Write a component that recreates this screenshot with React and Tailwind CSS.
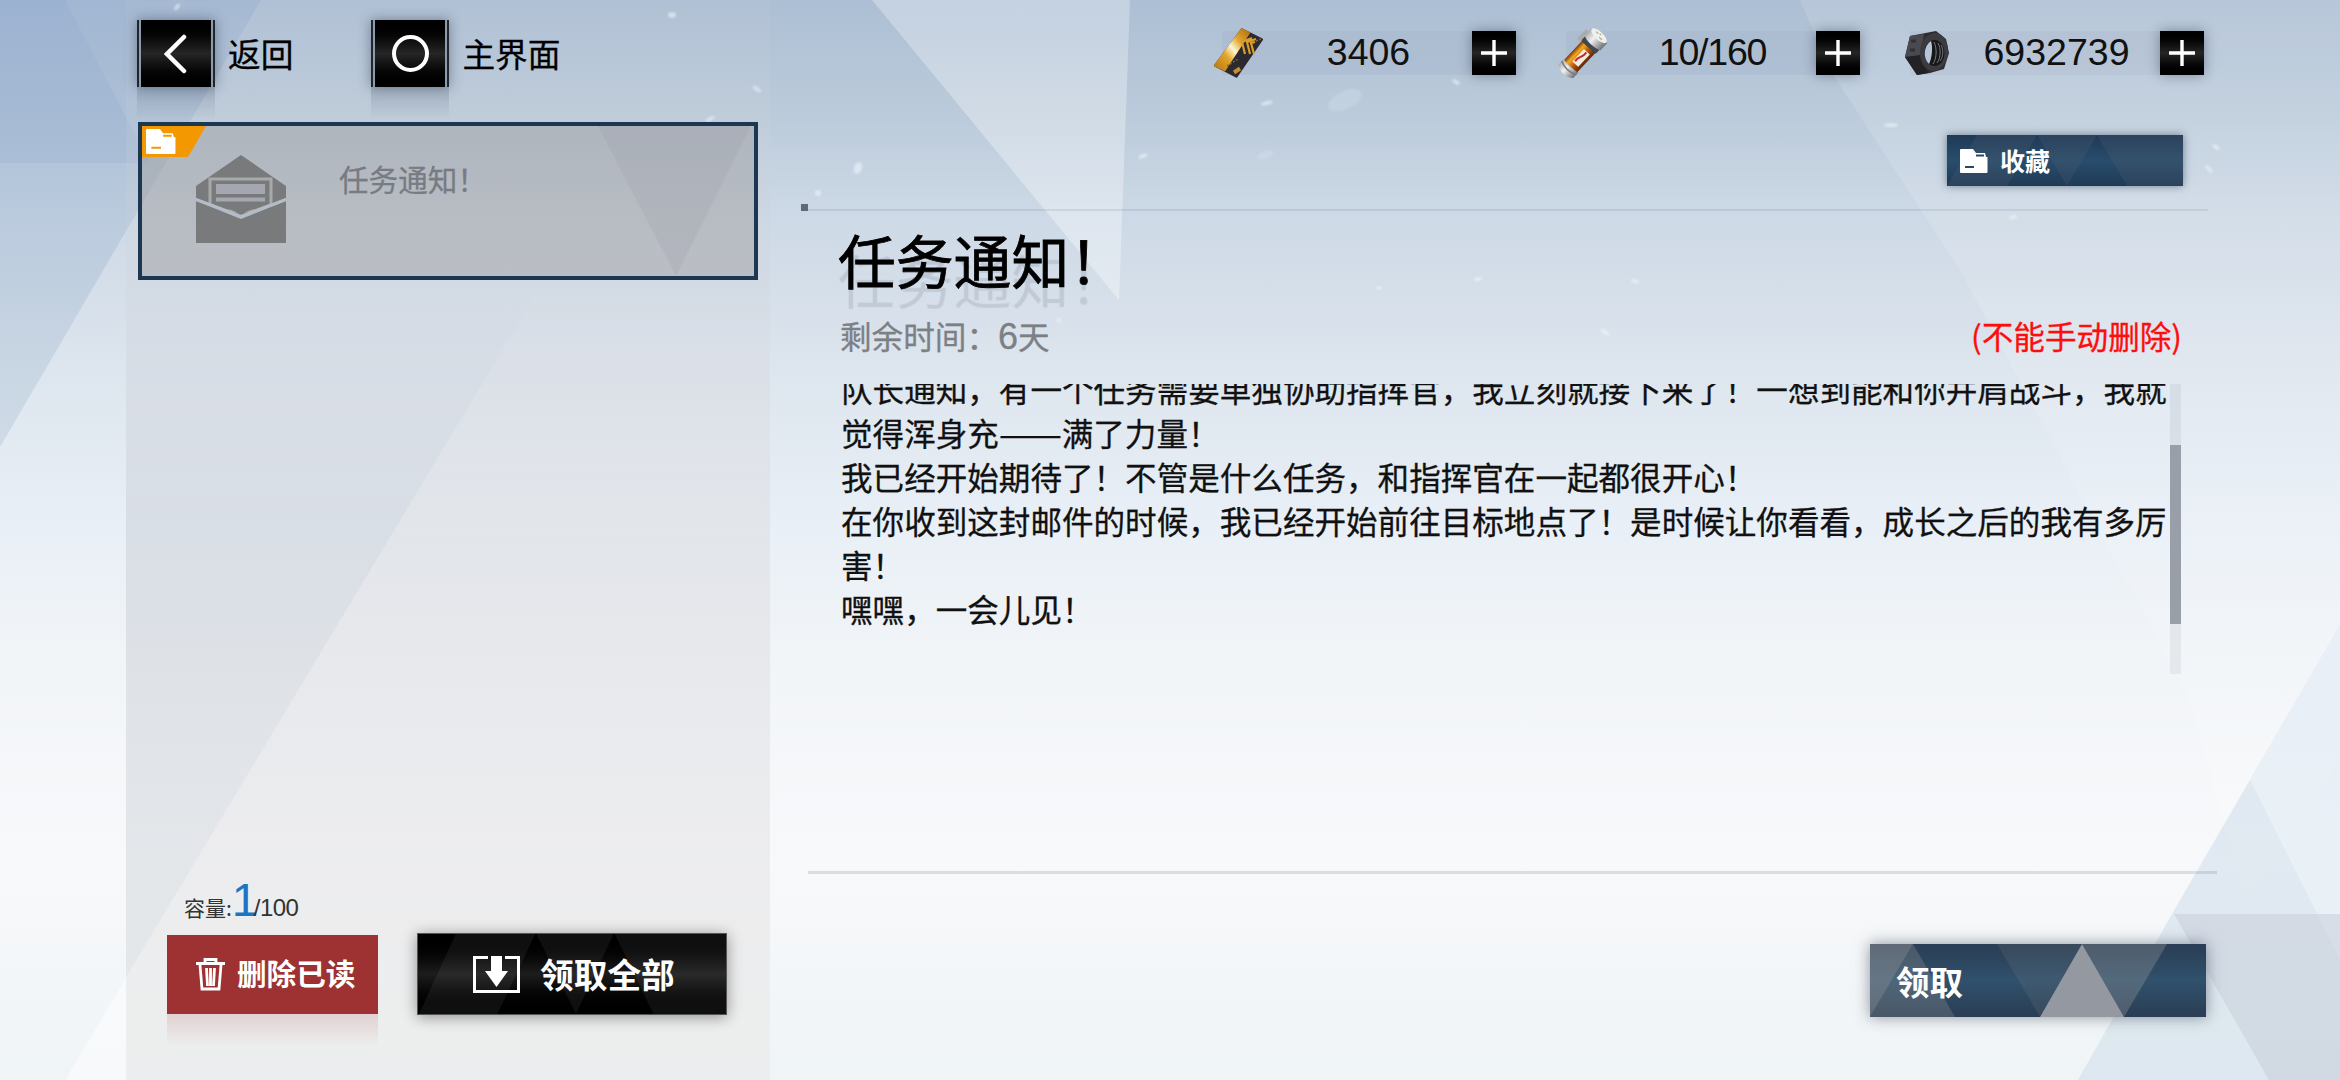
const FONT = "font-['Noto_Sans_CJK_SC',sans-serif]";

const mailLines = [
    '队长通知，有一个任务需要单独协助指挥官，我立刻就接下来了！一想到能和你并肩战斗，我就',
    <>觉得浑身充<span className="mr-[10px] inline-block origin-left scale-x-[1.19]">——</span>满了力量！</>,
    '我已经开始期待了！不管是什么任务，和指挥官在一起都很开心！',
    '在你收到这封邮件的时候，我已经开始前往目标地点了！是时候让你看看，成长之后的我有多厉',
    '害！',
    '嘿嘿，一会儿见！',
];

// small light flecks scattered over the sky: x, y, rx, ry, angle
const flecks = [
    [177, 7, 4, 2, -50], [672, 15, 4, 3, 0], [757, 89, 5, 2, 35], [710, 119, 5, 2, -30],
    [1267, 103, 6, 2, -15], [1265, 155, 9, 4, -20], [1143, 156, 5, 2, -20], [818, 193, 3, 3, 0],
    [858, 168, 4, 6, 20], [1891, 125, 7, 2, 0], [2216, 147, 4, 2, 30], [2209, 169, 5, 2, 50],
    [1478, 279, 4, 2, -10], [1605, 332, 5, 2, 30], [1635, 281, 4, 2, 10], [1379, 288, 3, 1.5, 0],
    [2013, 217, 4, 2, -20], [1456, 82, 4, 2, 30], [1059, 320, 2, 2, 0], [1345, 100, 18, 9, -25],
];

function Backdrop() {
    return (
        <svg className="absolute inset-0 h-full w-full" viewBox="0 0 2340 1080" preserveAspectRatio="none">
            <defs>
                <linearGradient id="sky" x1="0" y1="0" x2="0" y2="1">
                    <stop offset="0" stopColor="#adbfd4" />
                    <stop offset="0.1" stopColor="#bacada" />
                    <stop offset="0.2" stopColor="#cdd9e6" />
                    <stop offset="0.33" stopColor="#dce4ed" />
                    <stop offset="0.48" stopColor="#e8eff6" />
                    <stop offset="0.62" stopColor="#f2f5f8" />
                    <stop offset="0.8" stopColor="#f8f9fb" />
                    <stop offset="1" stopColor="#eff4f6" />
                </linearGradient>
                <linearGradient id="fadeBlue" x1="0" y1="0" x2="0" y2="1">
                    <stop offset="0" stopColor="#8fa9cf" stopOpacity="0.4" />
                    <stop offset="1" stopColor="#a0b8cc" stopOpacity="0.3" />
                </linearGradient>
                <linearGradient id="fadeWhite" x1="0" y1="0" x2="0" y2="1">
                    <stop offset="0" stopColor="#fff" stopOpacity="0.28" />
                    <stop offset="1" stopColor="#fff" stopOpacity="0.35" />
                </linearGradient>
                <linearGradient id="facet" x1="0" y1="0" x2="0" y2="1">
                    <stop offset="0" stopColor="#fff" stopOpacity="0" />
                    <stop offset="0.3" stopColor="#fff" stopOpacity="0.25" />
                    <stop offset="1" stopColor="#fff" stopOpacity="0.5" />
                </linearGradient>
                <linearGradient id="shade" gradientUnits="userSpaceOnUse" x1="0" y1="279" x2="0" y2="1080">
                    <stop offset="0" stopColor="#c3d0e0" stopOpacity="0" />
                    <stop offset="0.3" stopColor="#c9d5e0" stopOpacity="0.3" />
                    <stop offset="1" stopColor="#d5e0ea" stopOpacity="0.45" />
                </linearGradient>
                <filter id="soft"><feGaussianBlur stdDeviation="0.8" /></filter>
            </defs>
            <rect width="2340" height="1080" fill="url(#sky)" />
            <polygon points="0,0 261,0 0,447" fill="url(#fadeBlue)" />
            <polygon points="0,0 65,0 150,163 0,163" fill="#8ba6cd" opacity="0.2" />
            <polygon points="545,279 126,977 126,279" fill="url(#shade)" />
            <polygon points="545,279 65,1080 770,1080 770,279" fill="url(#facet)" />
            <polygon points="872,0 1130,0 1119,300" fill="url(#fadeWhite)" />
            <polygon points="1830,70 1960,270 2190,700 2245,905 2340,760 2340,0 1800,0" fill="#fff" opacity="0.13" />
            <polygon points="2340,625 2172,914 2078,1080 2340,1080" fill="#cddcea" opacity="0.55" />
            <polygon points="2340,625 2250,780 2340,960" fill="#f4f8fd" opacity="0.45" />
            <polygon points="2174,914 2340,914 2340,1080 2269,1080" fill="#c5cbd8" opacity="0.5" />
            {flecks.map(([x, y, rx, ry, a]) => (
                <ellipse key={`${x}-${y}`} cx={x} cy={y} rx={rx} ry={ry} fill="#eef6fb" filter="url(#soft)" opacity={rx > 8 ? 0.18 : 0.6} transform={`rotate(${a} ${x} ${y})`} />
            ))}
        </svg>
    );
}

function NavButton({ label, children }) {
    return (
        <div className="flex items-center">
            <div className="relative flex h-[67px] w-[78px] justify-center border-x-2 border-[#20262c] bg-[#8d9cab] px-[2px] shadow-[0_0_12px_rgba(30,40,60,0.45)]">
                <div className="flex h-full w-full items-center justify-center bg-linear-to-b from-black via-[#262626] to-black">{children}</div>
                <div className="absolute -inset-x-[2px] top-full h-8 bg-linear-to-b from-slate-700/20 to-transparent" />
            </div>
            <span className="ml-[13px] text-[32.700px] leading-none text-black [-webkit-text-stroke:0.3px_black]">{label}</span>
        </div>
    );
}

function Currency({ value, icon, tracking = '' }) {
    return (
        <div className="flex h-[50px] w-[304px] items-center">
            <div className="z-10 flex w-[54px] justify-center">{icon}</div>
            <div className="-ml-[44px] flex h-[44px] w-[250px] items-center bg-slate-600/5">
                <span className={`ml-[43px] w-[208px] text-center font-['Liberation_Sans',Arial,sans-serif] text-[37.5px] leading-none text-[#111] ${tracking}`}>{value}</span>
            </div>
            <div className="flex h-[44px] w-[44px] shrink-0 items-center justify-center bg-linear-to-b from-black via-[#262626] to-black shadow-[0_0_12px_rgba(20,30,50,0.4)]">
                <svg className="h-7 w-7" viewBox="0 0 28 28">
                    <path d="M14 1v26M1 14h26" stroke="#fff" strokeWidth="3.4" />
                </svg>
            </div>
        </div>
    );
}

function CardIcon() {
    return (
        <svg className="h-[52px] w-[54px]" viewBox="0 0 54 52">
            <defs>
                <linearGradient id="gold" x1="1" y1="0" x2="0" y2="1">
                    <stop offset="0" stopColor="#a8690f" />
                    <stop offset="0.3" stopColor="#e0a52c" />
                    <stop offset="0.48" stopColor="#fff6d2" />
                    <stop offset="0.65" stopColor="#e3a62a" />
                    <stop offset="1" stopColor="#b5720f" />
                </linearGradient>
            </defs>
            <path d="M29.500 1l21 10.500q1 .6.4 1.600L25.500 50q-.6 1-1.600.4L2.500 39.500q-1-.6-.4-1.600z" fill="#2a2a2f" />
            <path d="M29.500 1l9 4.500L13 44.500l-10.500-5q-1-.6-.4-1.600z" fill="url(#gold)" />
            <path d="M40 11l-10 4 3 12M44 12l-9 3 3 12M43 15l-4 1 3 11" stroke="#dc9c2a" strokeWidth="2.200" fill="none" />
            <path d="M15 39l11-7M44 14l5-2" stroke="#80653a" strokeWidth="1.500" strokeDasharray="2 1.500" />
            <path d="M22 45.500l6-4" stroke="#c48f2f" strokeWidth="4" />
        </svg>
    );
}

function BottleIcon() {
    return (
        <svg className="h-[50px] w-[54px] overflow-visible" viewBox="0 0 54 50">
            <defs>
                <linearGradient id="amber">
                    <stop offset="0" stopColor="#7c3606" />
                    <stop offset="0.25" stopColor="#f0a822" />
                    <stop offset="0.6" stopColor="#b85a0c" />
                    <stop offset="1" stopColor="#5e2606" />
                </linearGradient>
                <linearGradient id="steel">
                    <stop offset="0" stopColor="#a9abad" />
                    <stop offset="0.4" stopColor="#f1f1f1" />
                    <stop offset="1" stopColor="#707276" />
                </linearGradient>
            </defs>
            <g transform="translate(-1 1) rotate(43 27 25)">
                <rect x="18" y="10" width="18" height="32" fill="url(#amber)" />
                <rect x="25" y="20" width="8" height="17" fill="#f4ece4" />
                <path d="M27 35c-2-6 4-8 2-14" stroke="#c02a2a" strokeWidth="2" fill="none" />
                <rect x="17" y="9" width="20" height="7" rx="2" fill="#43474d" />
                <path d="M16 0q11-6 22 0v10q-11 4-22 0z" fill="url(#steel)" />
                <rect x="13" y="4" width="4" height="13" fill="#a9acaf" />
                <ellipse cx="27" cy="0" rx="10" ry="4" fill="#efefec" />
                <path d="M22-1h3M28 1h4M26-2h2" stroke="#aaa58a" />
                <path d="M17 41q10 4 20 0v8q-10 7-20 0z" fill="url(#steel)" />
                <path d="M17 44q10 5 20 0" stroke="#77797c" strokeWidth="1.500" fill="none" />
            </g>
        </svg>
    );
}

function NutIcon() {
    return (
        <svg className="h-[46px] w-[46px]" viewBox="0 0 46 46">
            <path d="M6 6L32 1l10 8 3 14-5 16-14 4-13 2L1 27z" fill="#2d2d30" />
            <path d="M6 6l14-2-4 22-15 1z" fill="#4a494f" />
            <path d="M1 27l15-2 8 18-11 2z" fill="#222225" />
            <path d="M7 11h5M6 20h5" stroke="#303035" strokeWidth="3" />
            <ellipse cx="30" cy="22" rx="14" ry="19" fill="#3c3c40" transform="rotate(6 30 22)" />
            <ellipse cx="30.500" cy="23" rx="10" ry="13" fill="#17171a" />
            <path d="M27 11c-8 5-8 18-2 23 3-6 4-17 2-23z" fill="#b6c6d6" />
            <path d="M30 12c3 6 3 16-1 22M34 13c3 5 3 15-1 20M37 15c3 5 2 12-1 16" stroke="#77777b" fill="none" />
        </svg>
    );
}

function FolderIcon({ className, accent }) {
    return (
        <svg className={className} viewBox="0 0 28 24" preserveAspectRatio="none">
            <path d="M1 0h12l3 4h9l1 4h1.500v15a1 1 0 0 1-1 1H1a1 1 0 0 1-1-1V1a1 1 0 0 1 1-1z" fill="#fff" />
            <path d="M16 6.500h8M5 18h9" stroke={accent} strokeWidth="2" />
        </svg>
    );
}

function EnvelopeIcon() {
    return (
        <svg className="h-[88px] w-[90px]" viewBox="0 0 90 88">
            <path d="M45 0l45 31v12L45 62 0 43V31z" fill="#797a7b" />
            <path d="M14 24h61v26L58 56H31l-17-6z" fill="#797a7b" stroke="#a7a9ab" strokeWidth="3" />
            <path d="M20 29h49v10H20zM20 42.500h49v4H20z" fill="#a5a7b0" />
            <path d="M31 53h28l-14 6z" fill="#797a7b" />
            <path d="M0 46l45 18 45-18v42H0z" fill="#797a7b" />
            <path d="M0 44.500l45 17 45-17" stroke="#b3bdc7" strokeWidth="3" fill="none" />
        </svg>
    );
}

function MailCard() {
    return (
        <div className="relative flex h-[158px] w-[620px] border-4 border-[#1b3752] bg-[#969393]/40">
            <svg className="absolute inset-0 h-full w-full" viewBox="0 0 612 150" preserveAspectRatio="none">
                <path d="M456 0h153L534 150z" fill="#8c8f9b" opacity="0.16" />
                <path d="M0 0h64L46 31H0z" fill="#f39800" />
            </svg>
            <FolderIcon className="absolute left-[4px] top-[3px] h-[25px] w-[30px]" accent="#f39800" />
            <div className="ml-[54px] mt-[29px]"><EnvelopeIcon /></div>
            <span className="ml-[53px] mt-[35px] text-[29.6px] leading-[36px] text-[#787b82] [-webkit-text-stroke:0.3px_#787b82]">任务通知！</span>
        </div>
    );
}

export default function App() {
    return (
        <div className={`relative h-[1080px] w-[2340px] overflow-hidden ${FONT}`}>
            <Backdrop />
            <div className="relative flex h-full">
                <aside className="ml-[126px] flex h-full w-[644px] flex-col bg-linear-to-b from-[#d0d0d8]/10 via-[#cfd0d6]/40 to-[#e6e6e6]/60">
                    <div className="ml-[11px] mt-[20px] flex gap-[78px]">
                        <NavButton label="返回">
                            <svg className="h-[40px] w-[24px]" viewBox="0 0 24 40">
                                <path d="M20 3L3 20l17 17" stroke="#fff" strokeWidth="4.500" fill="none" strokeLinecap="round" />
                            </svg>
                        </NavButton>
                        <NavButton label="主界面">
                            <div className="h-[37px] w-[37px] rounded-full border-4 border-white" />
                        </NavButton>
                    </div>
                    <div className="ml-[12px] mt-[35px]"><MailCard /></div>
                    <div className="mt-auto ml-[58px] flex items-baseline text-[21px] leading-[50px] text-[#333]">
                        <span>容量:</span>
                        <span className="w-[22px] font-['Liberation_Sans',Arial,sans-serif] text-[47px] text-[#1b75c4]">1</span>
                        <span className="font-['Liberation_Sans',Arial,sans-serif] text-[24px] tracking-[-0.6px]">/100</span>
                    </div>
                    <div className="mb-[65px] ml-[41px] flex items-center gap-[39px]">
                        <div className="relative flex h-[79px] w-[211px] items-center bg-[#9e3131]">
                            <svg className="ml-[29px] h-[33px] w-[29px]" viewBox="0 0 29 33">
                                <path d="M0 5.500h29M9 4V1.500h11V4M4 7l2 24h17l2-24M10.500 10l1 18M14.500 10v18M18.500 10l-1 18" stroke="#fff" strokeWidth="2.800" fill="none" />
                            </svg>
                            <span className="ml-[12px] -mt-[3px] text-[29.6px] font-bold leading-none text-white">删除已读</span>
                            <div className="absolute inset-x-0 top-full h-8 bg-linear-to-b from-[#9e3131]/15 to-transparent" />
                        </div>
                        <div className="relative flex h-[82px] w-[310px] items-center border border-[#555] bg-linear-to-b from-black via-[#1d1d1d] to-black shadow-[0_2px_14px_rgba(0,0,0,0.4)]">
                            <svg className="absolute inset-0 h-full w-full" viewBox="0 0 310 82" preserveAspectRatio="none">
                                <path d="M38 0h80L80 82H1zM119 0h78l-38 82zM198 0h112v82h-73z" fill="#fff" opacity="0.06" />
                            </svg>
                            <svg className="relative ml-[55px] h-[37px] w-[47px]" viewBox="0 0 47 37">
                                <path d="M15 1.500H1.500v34h44v-34H32" stroke="#fff" strokeWidth="3" fill="none" />
                                <path d="M18 0h11v15h6L23.500 31 12 15h6z" fill="#fff" />
                            </svg>
                            <span className="relative ml-[20px] text-[33.7px] font-bold leading-none text-white">领取全部</span>
                        </div>
                    </div>
                </aside>

                <main className="flex h-full flex-1 flex-col">
                    <div className="ml-[442px] mt-[28px] flex gap-[40px]">
                        <Currency value="3406" icon={<CardIcon />} />
                        <Currency value="10/160" icon={<BottleIcon />} tracking="tracking-[-1.2px]" />
                        <Currency value="6932739" icon={<NutIcon />} />
                    </div>
                    <div className="relative ml-[1177px] mt-[57px] flex h-[51px] w-[236px] items-center bg-linear-to-b from-[#1f3a56] via-[#284d6c] to-[#1f3a56] shadow-[0_0_8px_rgba(20,40,60,0.5)]">
                        <svg className="absolute inset-0 h-full w-full" viewBox="0 0 236 51" preserveAspectRatio="none">
                            <path d="M30 0h60L60 51H0zM90 0h60l-30 51zM150 0h86v51h-56z" fill="#6a6a7a" opacity="0.18" />
                        </svg>
                        <FolderIcon className="relative ml-[13px] h-[24px] w-[28px]" accent="#284866" />
                        <span className="relative ml-[12px] text-[25px] font-bold leading-none text-white">收藏</span>
                    </div>
                    <div className="ml-[31px] mt-[18px] flex h-[7px] w-[1407px] items-end">
                        <div className="h-[7px] w-[7px] bg-[#5f6a76]" />
                        <div className="h-[2px] flex-1 bg-slate-500/15" />
                    </div>
                    <div className="ml-[68px] mt-[19px] h-[79px] overflow-hidden">
                        <h1 className="text-[57.8px] leading-[58px] text-black [-webkit-text-stroke:0.8px_black] [text-shadow:0_20px_1px_rgba(90,95,115,0.17)]">任务通知！</h1>
                    </div>
                    <div className="ml-[70px] mt-[4px] flex w-[1342px] justify-between text-[31.6px] leading-[44px]">
                        <span className="text-[#7c8085] [-webkit-text-stroke:0.3px_#7c8085]">
                            剩余时间：<span className="font-['Liberation_Sans',Arial,sans-serif] text-[36px] leading-none">6</span>天
                        </span>
                        <span className="text-[#ff0d0d] [-webkit-text-stroke:0.3px_#ff0d0d]">(不能手动删除)</span>
                    </div>
                    <div className="ml-[71px] mt-[27px] flex h-[290px] w-[1340px] overflow-hidden">
                        <div className="-mt-[18px] flex-1 whitespace-nowrap text-[31.57px] leading-[44.1px] text-[#111] [-webkit-text-stroke:0.3px_#111]">
                            {mailLines.map((line, i) => (
                                <p key={i}>{line}</p>
                            ))}
                        </div>
                        <div className="h-full w-[11px] shrink-0 bg-slate-500/10 pt-[61px]">
                            <div className="h-[179px] bg-[#999fa8]" />
                        </div>
                    </div>
                    <div className="ml-[38px] mt-[197px] h-[3px] w-[1409px] bg-slate-500/20" />
                    <div className="relative ml-[1100px] mt-[70px] flex h-[73px] w-[336px] items-center bg-linear-to-b from-[#2a3d54] via-[#30516c] to-[#2a3d54] shadow-[0_0_14px_rgba(40,50,70,0.5)]">
                        <svg className="absolute inset-0 h-full w-full" viewBox="0 0 336 73" preserveAspectRatio="none">
                            <path d="M0 0h43L0 73z" fill="#b5b0ad" opacity="0.4" />
                            <path d="M43 0l42 73H0z" fill="#b0aba8" opacity="0.24" />
                            <path d="M127 0h85l-42 73z" fill="#8a8a8a" opacity="0.16" />
                            <path d="M212 0l42 73h-84z" fill="#9498a1" />
                            <path d="M212 0h85l-43 73z" fill="#b0aba8" opacity="0.28" />
                        </svg>
                        <span className="relative ml-[26px] text-[33.5px] font-bold leading-none text-white">领取</span>
                    </div>
                </main>
            </div>
        </div>
    );
}
